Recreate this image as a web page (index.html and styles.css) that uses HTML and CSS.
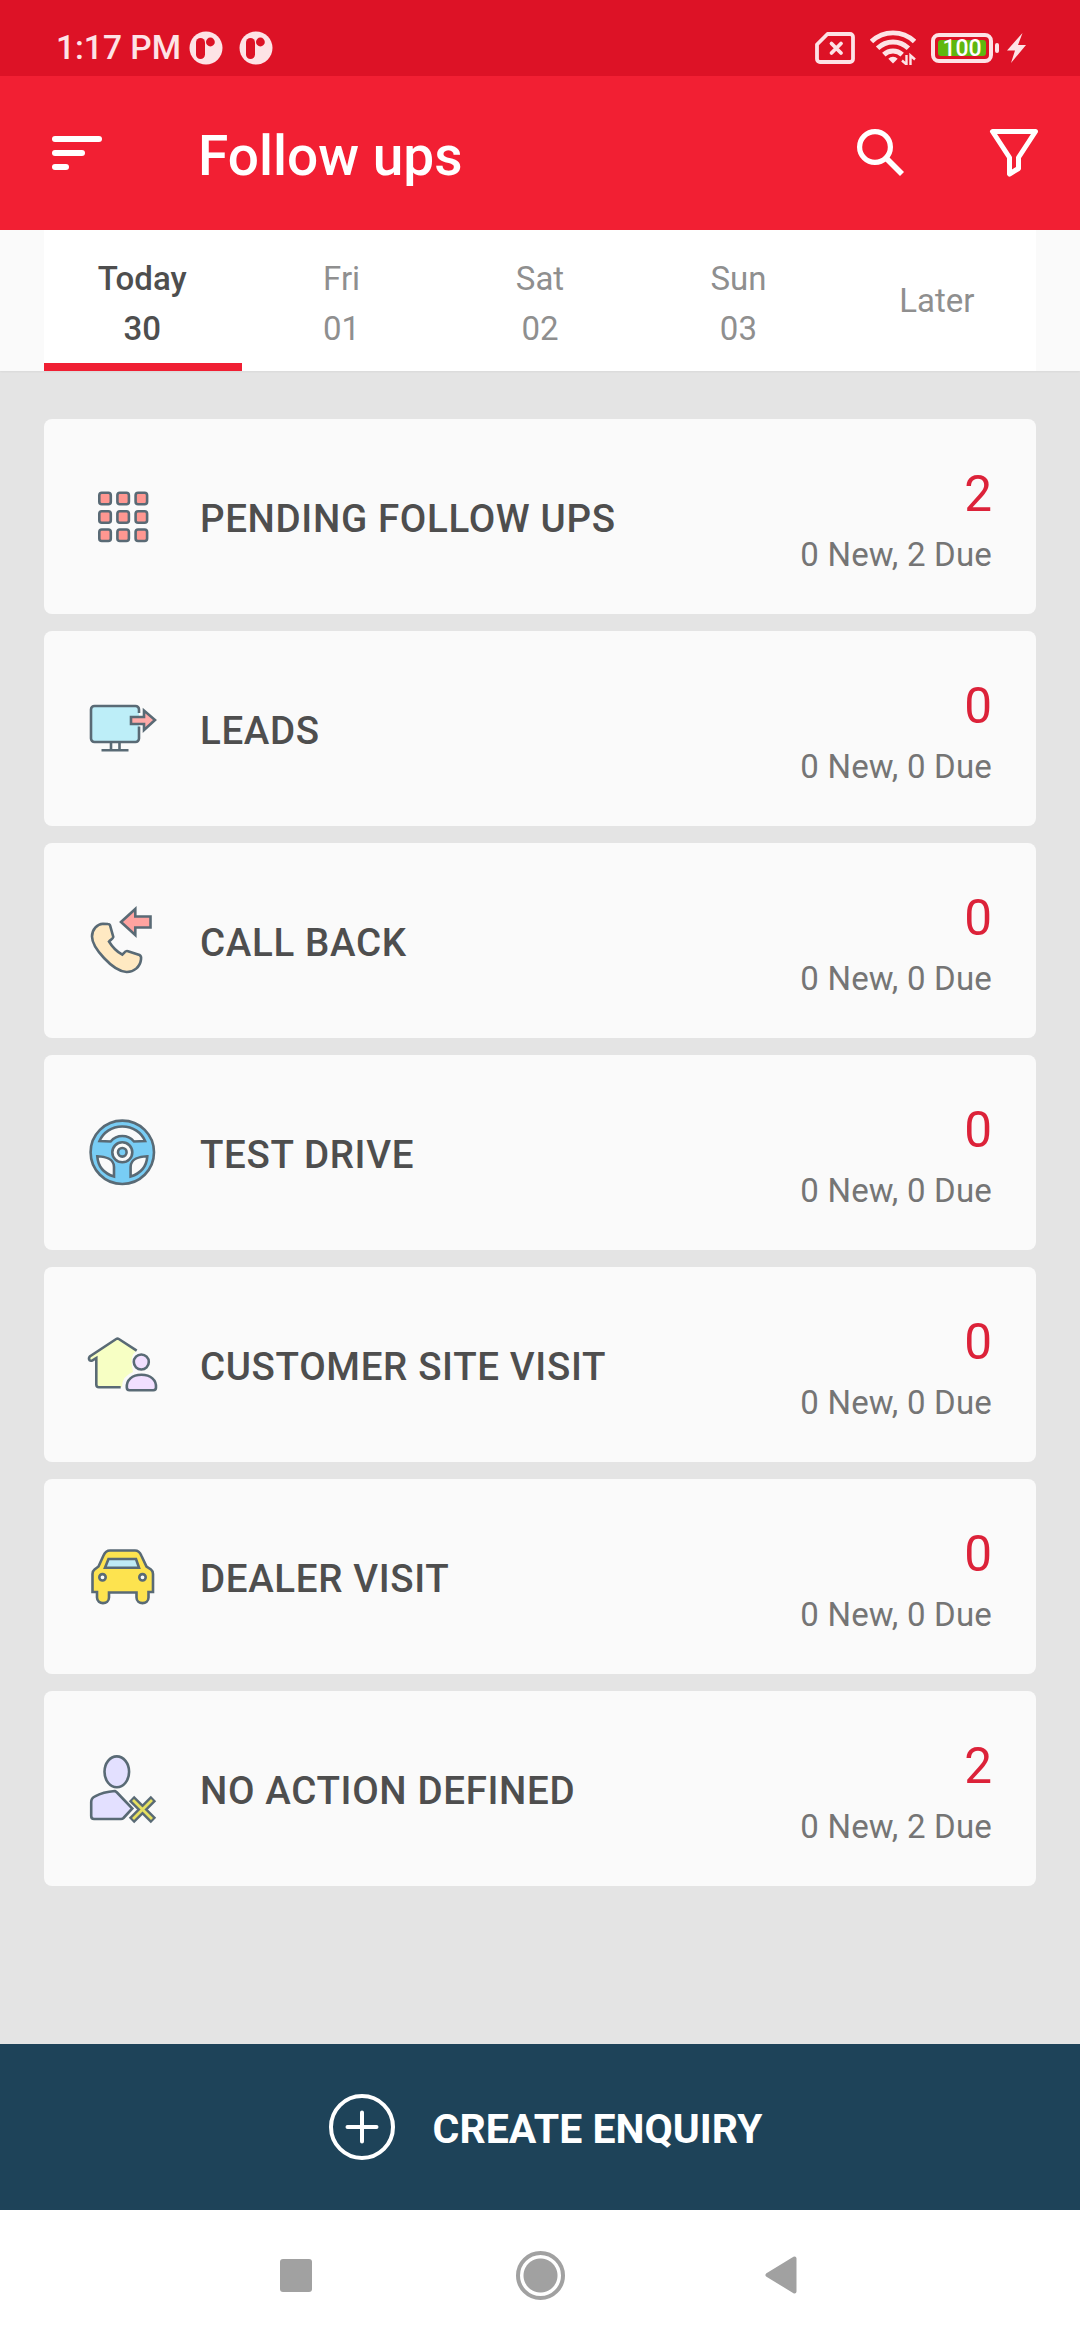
FILE: index.html
```html
<!DOCTYPE html>
<html lang="en">
  <head>
    <meta charset="UTF-8" />
    <meta name="viewport" content="width=device-width, initial-scale=1.0" />
    <title>Follow ups</title>
    <link rel="stylesheet" href="styles.css">
  </head>
  <body>
    <!-- Status Bar -->
    <div class="status-bar">
      <span class="clock">1:17 PM</span>
      <svg class="notif" width="34" height="34" viewBox="0 0 34 34">
        <circle cx="17" cy="17" r="16.5" fill="#fde3e6" />
        <rect x="7" y="7" width="9" height="21" rx="4.5" fill="#dd1226" />
        <circle cx="21.4" cy="11" r="4.4" fill="#dd1226" />
      </svg>
      <svg class="notif" width="34" height="34" viewBox="0 0 34 34">
        <circle cx="17" cy="17" r="16.5" fill="#fde3e6" />
        <rect x="7" y="7" width="9" height="21" rx="4.5" fill="#dd1226" />
        <circle cx="21.4" cy="11" r="4.4" fill="#dd1226" />
      </svg>

      <div class="status-right">
        <!-- No SIM -->
        <svg width="40" height="32" viewBox="0 0 40 32" fill="none" stroke="#fde3e6">
          <path d="M12.5 2H35a3 3 0 0 1 3 3v22a3 3 0 0 1-3 3H5a3 3 0 0 1-3-3V12.5Z" stroke-width="3.8" stroke-linejoin="round" />
          <path d="M16.5 11.5l9.5 9.5M26 11.5l-9.5 9.5" stroke-width="3.8" stroke-linecap="round" />
        </svg>
        <!-- Wifi -->
        <svg class="wifi" width="46" height="35" viewBox="0 0 46 35" fill="none" stroke="#fde3e6" stroke-width="4.9">
          <path d="M1.5 11.5a31 31 0 0 1 43 0" />
          <path d="M7.6 18.3a22 22 0 0 1 30.8 0" />
          <path d="M13.8 24.6a13.5 13.5 0 0 1 18.4 0" />
          <path d="M23 33.5l-4.7-4.8a6.8 6.8 0 0 1 9.4 0Z" fill="#fde3e6" stroke="none" />
          <path d="M36.5 25v9.5l-4.5-4M40.5 35v-9.5l4.5 4" stroke-width="2.4" />
        </svg>
        <!-- Battery -->
        <div class="battery"><span>100</span></div>
        <div class="battery-nub"></div>
        <svg width="19" height="30" viewBox="0 0 19 30">
          <path d="M15.5 0L0 17.5H8L4 30L19 12H11Z" fill="#fde3e6" />
        </svg>
      </div>
    </div>

    <!-- App Bar -->
    <div class="app-bar">
      <div class="menu-icon">
        <span></span>
        <span></span>
        <span></span>
      </div>
      <h1>Follow ups</h1>
      <svg class="search-icon" width="50" height="50" viewBox="0 0 50 50" fill="none" stroke="#fff">
        <circle cx="19" cy="19" r="15.4" stroke-width="5.2" />
        <path d="M31 31L46 46" stroke-width="5.6" />
      </svg>
      <svg class="filter-icon" width="50" height="50" viewBox="0 0 50 50" fill="none" stroke="#fff" stroke-width="5" stroke-linejoin="round">
        <path d="M3.5 3.5H46.5L29.5 29.5V40.5L20.5 46V29.5Z" />
      </svg>
    </div>

    <!-- Day Tabs -->
    <div class="tabs">
      <div class="tab active">Today<br>30</div>
      <div class="tab">Fri<br>01</div>
      <div class="tab">Sat<br>02</div>
      <div class="tab">Sun<br>03</div>
      <div class="tab later">Later</div>
    </div>

    <!-- Follow up Cards -->
    <div class="cards">
      <div class="card">
        <svg class="icon" viewBox="0 0 77 77" fill="#ff9791">
          <rect x="15.3" y="14.8" width="11.5" height="11.5" rx="2.5" />
          <rect x="33.4" y="14.8" width="11.5" height="11.5" rx="2.5" />
          <rect x="51.6" y="14.8" width="11.5" height="11.5" rx="2.5" />
          <rect x="15.3" y="33.2" width="11.5" height="11.5" rx="2.5" />
          <rect x="33.4" y="33.2" width="11.5" height="11.5" rx="2.5" />
          <rect x="51.6" y="33.2" width="11.5" height="11.5" rx="2.5" />
          <rect x="15.3" y="51.5" width="11.5" height="11.5" rx="2.5" />
          <rect x="33.4" y="51.5" width="11.5" height="11.5" rx="2.5" />
          <rect x="51.6" y="51.5" width="11.5" height="11.5" rx="2.5" />
        </svg>
        <h2>PENDING FOLLOW UPS</h2>
        <div class="numbers">
          <div class="count">2</div>
          <div class="detail">0 New, 2 Due</div>
        </div>
      </div>

      <div class="card">
        <svg class="icon" viewBox="0 0 77 77">
          <rect x="7" y="16" width="48" height="36" rx="3.5" fill="#bdeef8" stroke="none" />
          <path d="M55 23V19.5a3.5 3.5 0 0 0-3.5-3.5H10.5a3.5 3.5 0 0 0-3.5 3.5V48.5a3.5 3.5 0 0 0 3.5 3.5H51.5a3.5 3.5 0 0 0 3.5-3.5V36.5" fill="none" />
          <path d="M27 52v8M35.5 52v8M17.5 60.3H44.5" fill="none" />
          <path d="M47 27H60V20.5L71 30L60 40V34H47Z" fill="#ffaaa8" />
        </svg>
        <h2>LEADS</h2>
        <div class="numbers">
          <div class="count">0</div>
          <div class="detail">0 New, 0 Due</div>
        </div>
      </div>

      <div class="card">
        <svg class="icon" viewBox="0 0 77 77">
          <path d="M37 20L51.3 7V14.5H66.5V25.5H51.3V33Z" fill="#ffa3a0" />
          <path d="M24 22c1.2 0 1.9 0.8 2.2 1.9L29.3 35c-0.5 2-2.8 2.8-4.3 4.5C28 44.5 33.5 50 38.3 52.7L40 51c1-1.5 2.4-2.3 4-1.8L55.5 53c1.6 0.8 1.8 2.6 1.5 4.5C56 65 50 70.2 42.5 70C34 69.5 26 62.5 20 56C13 48.5 8 41.5 8 34.5C8 27.5 13 22 19 21.8Z" fill="#ffe9c2" />
        </svg>
        <h2>CALL BACK</h2>
        <div class="numbers">
          <div class="count">0</div>
          <div class="detail">0 New, 0 Due</div>
        </div>
      </div>

      <div class="card">
        <svg class="icon" viewBox="0 0 77 77">
          <circle cx="38.3" cy="38.3" r="31.7" fill="#78cdf5" />
          <g fill="#fafafa">
            <path d="M15.5 27C19 18.5 27.5 12.5 38.3 12.5S57.6 18.5 61.1 27L50 27.5C47 24 43 22 38.3 22S29.6 24 26.6 27.5Z" />
            <path d="M13.3 42.3C21 42.5 30 45 30 53V62.5C20.5 59.5 14 52.5 13.3 42.3Z" />
            <path d="M63.3 42.3C55.6 42.5 46.6 45 46.6 53V62.5C56.1 59.5 62.6 52.5 63.3 42.3Z" />
            <circle cx="38.3" cy="38.3" r="10" />
          </g>
          <circle cx="38.3" cy="38.3" r="4.3" fill="#78cdf5" />
        </svg>
        <h2>TEST DRIVE</h2>
        <div class="numbers">
          <div class="count">0</div>
          <div class="detail">0 New, 0 Due</div>
        </div>
      </div>

      <div class="card">
        <svg class="icon" viewBox="0 0 77 77">
          <path d="M33.5 12.5L52 25Q46 30 48 40L49 46Q38 50 38 61H15.5Q12.5 61 12.5 58V33L6 34L5 31.5Z" fill="#f7ffc4" stroke="none" />
          <path d="M52.7 24.7L34.8 13Q33.5 12.2 32.2 13L5.8 30.5Q4.3 32.5 5.6 34.3Q6.8 35.3 8.5 34.3L12.3 32V58.5Q12.3 61.3 15 61.3H36.7" fill="none" />
          <circle cx="57.3" cy="36" r="7.5" fill="#f1dfff" />
          <path d="M45.5 64.3Q42.8 64.3 42.8 61.6C42.3 54 48 48.8 57.4 48.8S72.5 54 72 61.6Q72 64.3 69.3 64.3Z" fill="#f1dfff" />
        </svg>
        <h2>CUSTOMER SITE VISIT</h2>
        <div class="numbers">
          <div class="count">0</div>
          <div class="detail">0 New, 0 Due</div>
        </div>
      </div>

      <div class="card">
        <svg class="icon" viewBox="0 0 77 77" fill="#fde34f">
          <path d="M26 12.5H51C54.5 12.5 56 14.5 57.3 17.5L62.5 28.5L67 31.5Q69 33 69 36V54H64.5V59.5C64.5 67 52.5 67 52.5 59.5V54.5H25V59.5C25 67 13 67 13 59.5V54H8.5V36Q8.5 33 10.5 31.5L14.5 28.5L19.5 17.5C20.8 14.5 22.5 12.5 26 12.5Z" />
          <path d="M24.5 21H52L55 29.7H21Z" fill="#bfeaf5" />
          <circle cx="18.5" cy="39.3" r="3.2" fill="#fafafa" />
          <circle cx="58.5" cy="39.3" r="3.2" fill="#fafafa" />
        </svg>
        <h2>DEALER VISIT</h2>
        <div class="numbers">
          <div class="count">0</div>
          <div class="detail">0 New, 0 Due</div>
        </div>
      </div>

      <div class="card">
        <svg class="icon" viewBox="0 0 77 77" fill="#e3e0ff">
          <ellipse cx="32.8" cy="21.8" rx="12.3" ry="15.4" />
          <path d="M30.8 41Q32 41.5 33 42.5L48.3 58.5L39.5 68Q38.5 69 37 69H10Q7.2 69 7.2 66V52C7.2 49 8.5 47.5 11 46.3C17 43 24 41.5 30.8 41Z" />
          <path d="M47.5 48.5L69.5 70.5M69.5 48.5L47.5 70.5" stroke-width="7.6" />
          <path d="M49 50L68 69M68 50L49 69" stroke="#e6e060" stroke-width="2.8" />
        </svg>
        <h2>NO ACTION DEFINED</h2>
        <div class="numbers">
          <div class="count">2</div>
          <div class="detail">0 New, 2 Due</div>
        </div>
      </div>
    </div>

    <!-- Create Enquiry Button -->
    <button class="create-btn">
      <svg width="66" height="66" viewBox="0 0 66 66" fill="none" stroke="#fff" stroke-width="4">
        <circle cx="33" cy="33" r="31" />
        <path d="M33 18.5V47.5M18.5 33H47.5" stroke-linecap="round" />
      </svg>
      <span>CREATE ENQUIRY</span>
    </button>

    <!-- System Navigation -->
    <div class="nav-bar">
      <div class="nav-recent"></div>
      <div class="nav-home"></div>
      <svg width="32" height="38" viewBox="0 0 32 38">
        <path d="M29.5 2.5V35.5L2.5 19Z" fill="#a1a1a1" stroke="#a1a1a1" stroke-width="4" stroke-linejoin="round" />
      </svg>
    </div>
  </body>
</html>
```
FILE: styles.css
```css
/* Basic Reset */
* {
  margin: 0;
  padding: 0;
  box-sizing: border-box;
}

body {
  width: 1080px;
  height: 2340px;
  display: flex;
  flex-direction: column;
  overflow: hidden;
  font-family: Roboto, sans-serif;
  background-color: #e4e4e4;
}

/* Status Bar */
.status-bar {
  height: 76px;
  display: flex;
  align-items: center;
  padding: 19px 54px 0 56px;
  background-color: #dd1226;
  color: #fde3e6;
}

.clock {
  width: 133px;
  padding-top: 1px;
  font-size: 33.5px;
  font-weight: 500;
  line-height: 40px;
  white-space: nowrap;
}

.notif {
  margin-right: 16px;
}

.status-right {
  margin-left: auto;
  display: flex;
  align-items: center;
}

.wifi {
  margin-left: 15px;
}

.battery {
  width: 62px;
  height: 30px;
  margin-left: 15px;
  padding: 3px;
  border: 4px solid #fde3e6;
  border-radius: 8px;
}

.battery span {
  display: block;
  height: 16px;
  border-radius: 3px;
  background-color: #5fb70f;
  color: white;
  font-size: 23px;
  font-weight: 500;
  line-height: 18px;
  text-align: center;
}

.battery-nub {
  width: 4px;
  height: 10px;
  margin: 0 8px 0 2px;
  border-radius: 2px;
  background-color: #fde3e6;
}

/* App Bar */
.app-bar {
  height: 154px;
  display: flex;
  align-items: center;
  padding: 0 41px 0 52px;
  background-color: #f21f33;
  color: white;
}

.menu-icon {
  width: 50px;
  display: flex;
  flex-direction: column;
  gap: 8px;
}

.menu-icon span {
  width: 50px;
  height: 6px;
  border-radius: 3px;
  background-color: white;
}

.menu-icon span:nth-child(2) {
  width: 33px;
}

.menu-icon span:nth-child(3) {
  width: 17px;
}

.app-bar h1 {
  margin-left: 96px;
  padding-top: 5px;
  font-size: 55px;
  font-weight: 500;
}

.search-icon {
  margin-left: auto;
}

.filter-icon {
  margin-left: 83px;
}

/* Day Tabs */
.tabs {
  height: 141px;
  display: grid;
  grid-template-columns: repeat(5, 1fr);
  padding: 0 44px;
  background: linear-gradient(white, white) content-box, #fafafa;
  box-shadow: 0 1px 2px rgba(0, 0, 0, 0.05);
}

.tab {
  padding-top: 24px;
  color: #8f8f8f;
  font-size: 33px;
  line-height: 50px;
  text-align: center;
}

.tab.active {
  border-bottom: 8px solid #f01f33;
  padding-right: 2px;
  color: #4e4e4e;
  font-weight: 500;
}

.tab.later {
  padding-top: 46px;
}

/* Cards */
.cards {
  flex: 1;
  padding: 48px 44px 0;
}

.card {
  height: 195px;
  margin-bottom: 17px;
  padding: 0 44px 0 40px;
  display: flex;
  align-items: center;
  border-radius: 8px;
  background-color: #fafafa;
}

.icon {
  width: 77px;
  height: 77px;
  stroke: #596a75;
  stroke-width: 2.6;
}

.card h2 {
  margin-left: 39px;
  padding-top: 3px;
  color: #4e4e4e;
  font-size: 38.5px;
  font-weight: 500;
  letter-spacing: 0.65px;
}

.numbers {
  margin-left: auto;
  padding-top: 12px;
  text-align: right;
}

.count {
  color: #dc2239;
  font-size: 49.5px;
  line-height: 64px;
}

.detail {
  color: #757575;
  font-size: 33px;
  letter-spacing: 0.2px;
  line-height: 58px;
}

/* Create Enquiry Button */
.create-btn {
  height: 166px;
  display: flex;
  align-items: center;
  justify-content: center;
  gap: 38px;
  padding-left: 11px;
  border: none;
  background-color: #1e4359;
  color: white;
  font-family: inherit;
  font-size: 41px;
  font-weight: 700;
  cursor: pointer;
}

.create-btn span {
  padding-top: 3px;
}

/* System Navigation */
.nav-bar {
  height: 130px;
  display: flex;
  align-items: center;
  padding-left: 280px;
  background-color: white;
}

.nav-recent {
  width: 32px;
  height: 33px;
  border-radius: 3px;
  background-color: #a1a1a1;
}

.nav-home {
  width: 49px;
  height: 49px;
  margin: 0 200px 0 204px;
  border: 4px solid #a1a1a1;
  border-radius: 50%;
  background: radial-gradient(circle, #a1a1a1 16.5px, white 17.5px);
}
```
